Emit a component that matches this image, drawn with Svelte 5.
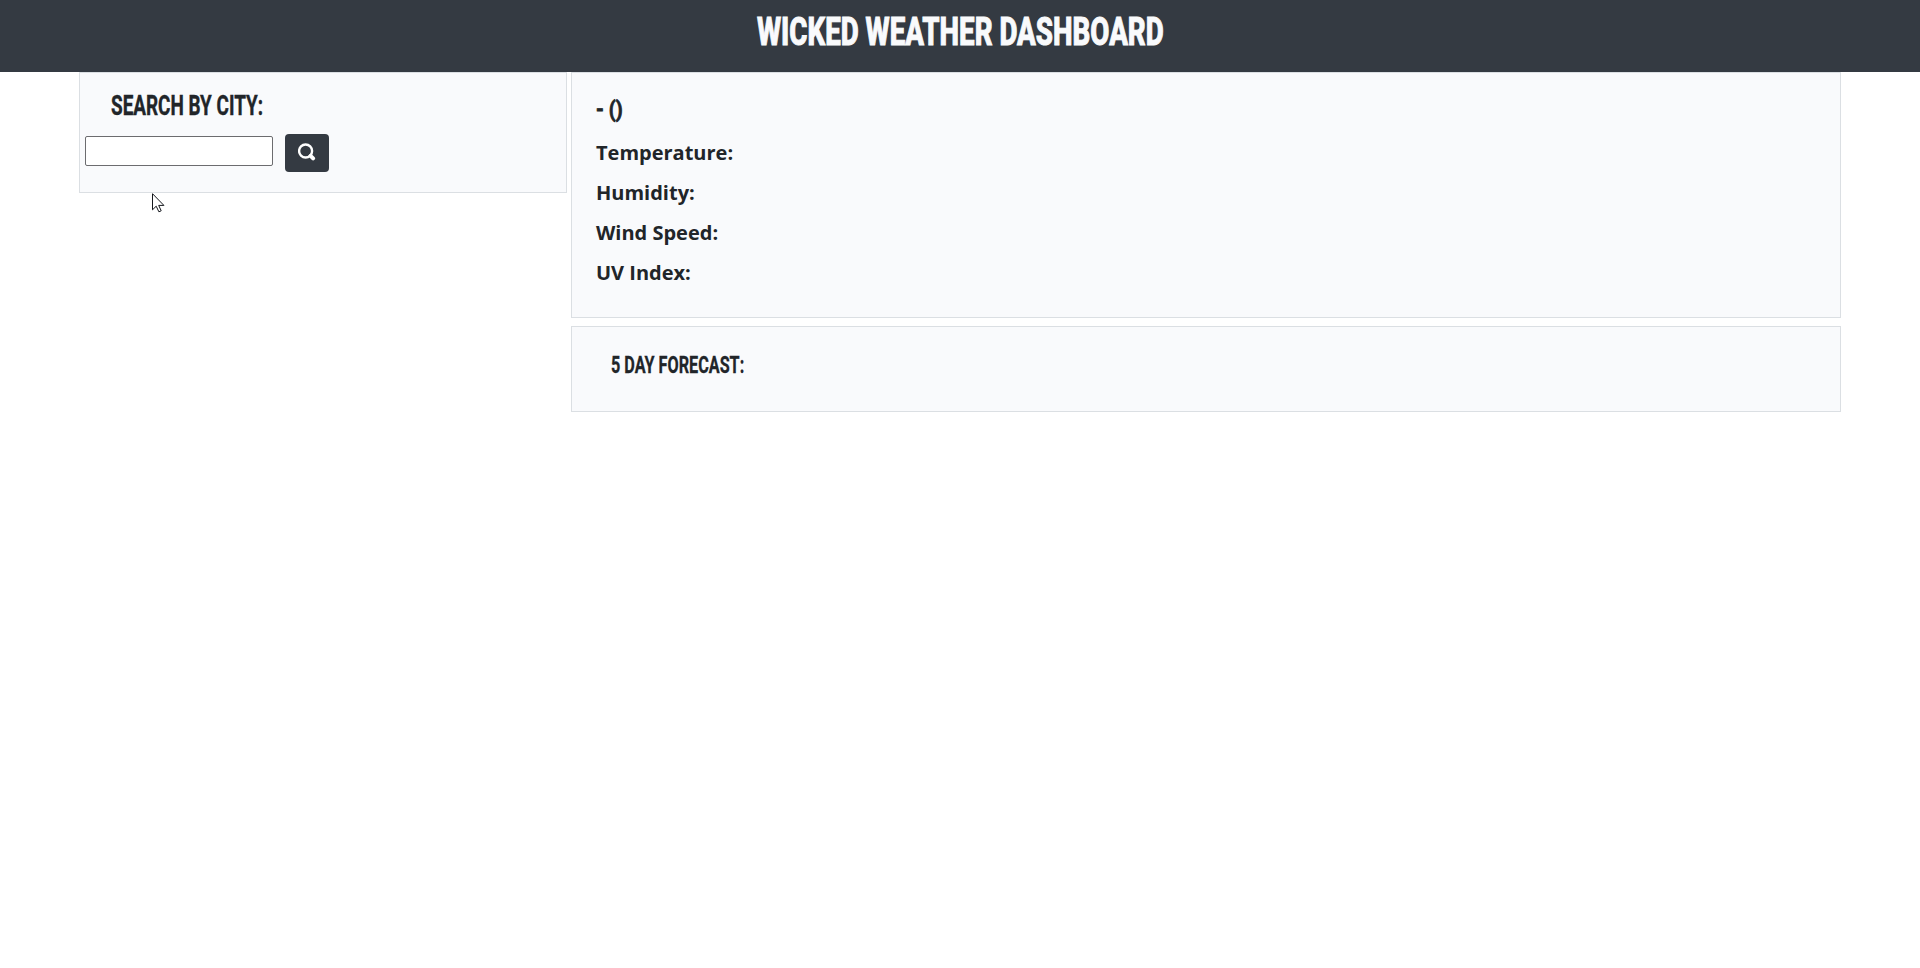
<script>
  const readings = ['Temperature:', 'Humidity:', 'Wind Speed:', 'UV Index:'];

  // Condenses a display heading to the given width.
  function condense(node, width) {
    const natural = node.offsetWidth;
    node.style.transform = `scaleX(${width / natural})`;
  }
</script>

<header>
  <h1><span use:condense={407}>WICKED WEATHER DASHBOARD</span></h1>
</header>

<main>
  <aside class="card search">
    <h2><span use:condense={152}>SEARCH BY CITY:</span></h2>
    <form onsubmit={(e) => e.preventDefault()}>
      <input type="text" aria-label="City" />
      <button aria-label="Search">
        <svg width="18" height="18" viewBox="0 0 18 18" fill="none" stroke="#fff">
          <circle cx="7.6" cy="8" r="6.5" stroke-width="2.4" />
          <path d="M12.6 12.8 15.1 15.3" stroke-width="4" stroke-linecap="round" />
        </svg>
      </button>
    </form>
  </aside>

  <div class="results">
    <section class="card current">
      <h3><span use:condense={27}>- ()</span></h3>
      {#each readings as label}
        <p>{label}</p>
      {/each}
    </section>
    <section class="card forecast">
      <h3><span use:condense={133}>5 DAY FORECAST:</span></h3>
    </section>
  </div>
</main>

<svg class="pointer" width="14" height="21" viewBox="0 0 14 21">
  <path d="M.5.7v16.1l3.7-3.6 2.7 5.6 2.3-1-2.5-5.4h5.2z" fill="#fff" stroke="#14171c" stroke-width="1" />
</svg>

<style>
  :global(body) {
    background: #fff;
    color: #212529;
    font-family: "Open Sans", sans-serif;
  }
  header {
    box-sizing: border-box;
    height: 72px;
    padding-top: 9px;
    background: #343a42;
    color: #f9fafc;
    text-align: center;
  }
  h1, h2, h3, p { margin: 0; }
  h1, h2, h3 {
    font-family: Roboto, sans-serif;
    font-weight: 800;
    white-space: nowrap;
  }
  h1 span, h2 span, h3 span { display: inline-block; }
  h2 span, h3 span { transform-origin: left; }
  h1 { font-size: 39.4px; line-height: 46px; -webkit-text-stroke: 1px currentColor; }
  h2 { font-size: 28px; line-height: 34px; padding-left: 31px; font-weight: 700; -webkit-text-stroke: 0.4px currentColor; }
  h3 { font-size: 24px; line-height: 28px; font-weight: 700; -webkit-text-stroke: 0.3px currentColor; }
  main {
    display: flex;
    align-items: flex-start;
    gap: 4px;
    padding-left: 79px;
  }
  .card {
    box-sizing: border-box;
    border: 1px solid #dbdfe3;
    background: #f9fafc;
  }
  .search { width: 488px; height: 121px; padding-top: 16px; }
  form { display: flex; gap: 12px; padding: 11px 0 0 5px; }
  input {
    box-sizing: border-box;
    width: 188px;
    height: 30px;
    margin: 2px 0 0;
    border: 1px solid #6c6c6f;
    border-radius: 2px;
    background: #fff;
  }
  button {
    width: 44px;
    height: 38px;
    padding: 0;
    border: 0;
    border-radius: 4px;
    background: #343a42;
    display: grid;
    place-items: center;
  }
  button svg { margin-top: -2px; }
  .results { display: flex; flex-direction: column; gap: 8px; width: 1270px; }
  .current { height: 246px; padding: 23px 24px; }
  .current h3 { font-size: 22px; margin-bottom: 9px; -webkit-text-stroke: 0.8px currentColor; }
  p { font-size: 20px; font-weight: 700; line-height: 40px; }
  .forecast { height: 86px; padding: 24px 39px; }
  .pointer { position: absolute; left: 152px; top: 193px; }
</style>
